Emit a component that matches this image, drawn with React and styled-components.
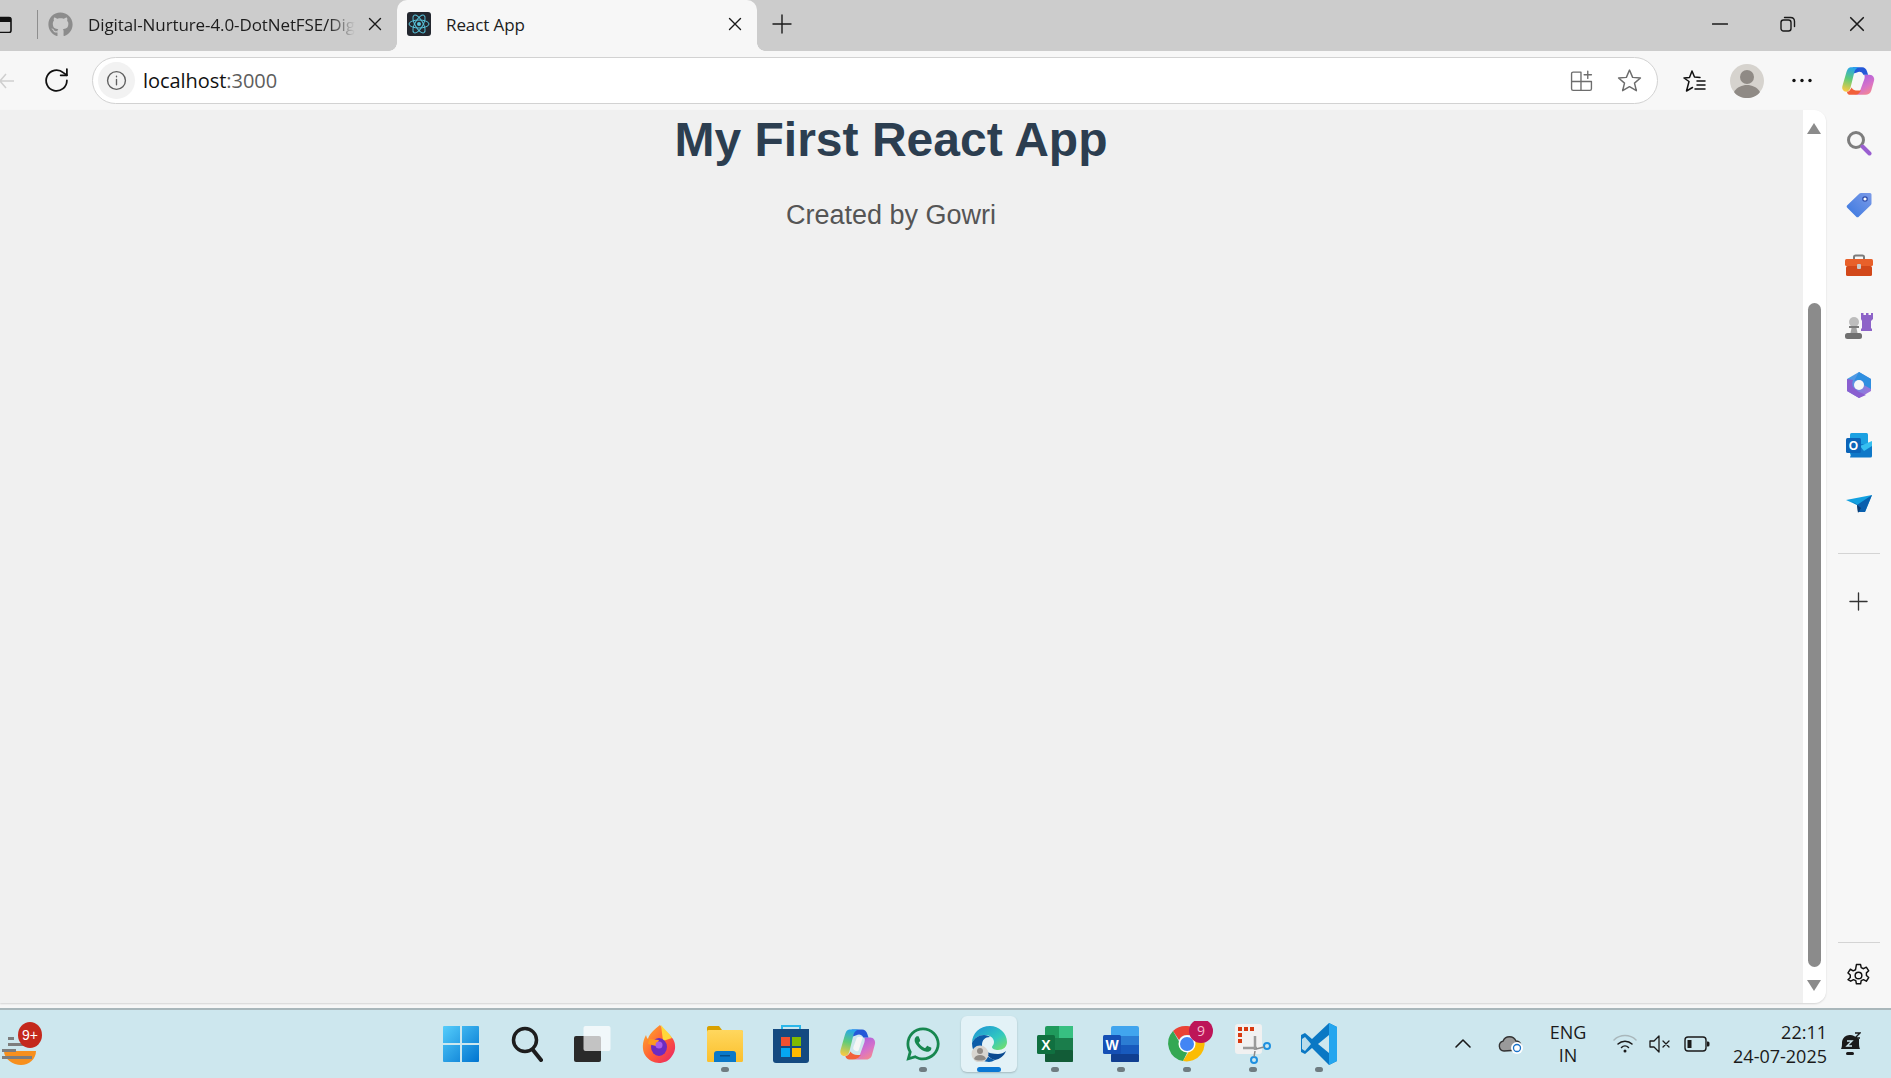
import React from "react";
import styled, { createGlobalStyle } from "styled-components";
import { FaGithub, FaWhatsapp } from "react-icons/fa";

const GlobalStyle = createGlobalStyle`
  html, body {
    margin: 0;
    padding: 0;
    overflow: hidden;
    background: #f7f7f7;
  }
  * {
    box-sizing: border-box;
  }
`;

const Screen = styled.div`
  width: 1891px;
  height: 1078px;
  display: flex;
  flex-direction: column;
  overflow: hidden;
  font-family: "Open Sans", "Noto Sans", sans-serif;
  color: #1b1b1b;
`;

/* ---------- browser tabs ---------- */

const TabStrip = styled.div`
  height: 51px;
  flex: none;
  display: flex;
  align-items: stretch;
  background: #cccccc;
`;

const WindowStub = styled.div`
  width: 38px;
  flex: none;
  display: flex;
  align-items: center;
  justify-content: space-between;
  padding-bottom: 3px;
`;

const TabDivider = styled.span`
  width: 1px;
  height: 29px;
  background: #8e8e8e;
`;

const Tab = styled.div`
  position: relative;
  display: flex;
  align-items: center;
  flex: none;
  width: ${(p) => (p.$active ? "360px" : "359px")};
  padding: 0 15px 3px 10px;
  background: ${(p) => (p.$active ? "#f7f7f7" : "transparent")};
  border-radius: 10px 10px 0 0;
  ${(p) =>
    p.$active &&
    `
    &::before, &::after {
      content: "";
      position: absolute;
      bottom: 0;
      width: 8px;
      height: 8px;
      background: radial-gradient(circle at var(--cx) 0, #cccccc 7.5px, #f7f7f7 8px);
    }
    &::before { left: -8px; --cx: 0; }
    &::after { right: -8px; --cx: 100%; }
  `}
`;

const TabTitle = styled.span`
  flex: 1;
  min-width: 0;
  margin-left: 15px;
  font-size: 17px;
  letter-spacing: -0.1px;
  white-space: nowrap;
  overflow: hidden;
  color: #1d1d1d;
  ${(p) =>
    p.$fade &&
    `
    margin-right: 13px;
    mask-image: linear-gradient(90deg, #000 90%, transparent 100%);
    -webkit-mask-image: linear-gradient(90deg, #000 90%, transparent 100%);
  `}
`;

const NewTab = styled.div`
  width: 50px;
  display: flex;
  align-items: center;
  justify-content: center;
  padding-bottom: 3px;
`;

const WindowControls = styled.div`
  margin-left: auto;
  display: flex;
  align-items: center;
  padding-bottom: 3px;
`;

const WindowButton = styled.div`
  width: 68.5px;
  display: flex;
  justify-content: center;
`;

/* ---------- toolbar ---------- */

const Toolbar = styled.div`
  height: 59px;
  flex: none;
  display: flex;
  align-items: center;
  background: #f7f7f7;
`;

const BackSlot = styled.div`
  width: 43px;
  flex: none;
  display: flex;
  align-items: center;
`;

const ReloadSlot = styled.div`
  width: 49px;
  flex: none;
  display: flex;
  align-items: center;
`;

const AddressBar = styled.div`
  width: 1566px;
  height: 47px;
  flex: none;
  display: flex;
  align-items: center;
  padding: 0 15px 0 5px;
  background: #ffffff;
  border: 1.5px solid #d2d2d2;
  border-radius: 24px;
`;

const SiteInfo = styled.div`
  width: 37px;
  height: 37px;
  flex: none;
  display: flex;
  align-items: center;
  justify-content: center;
  background: #f2f2f2;
  border-radius: 50%;
`;

const Url = styled.span`
  margin-left: 8px;
  font-size: 20px;
  letter-spacing: -0.05px;
  color: #111;
`;

const UrlPort = styled.span`
  color: #5d5d5d;
`;

const AddressActions = styled.div`
  margin-left: auto;
  display: flex;
  align-items: center;
  gap: 24px;
`;

const ToolbarActions = styled.div`
  flex: none;
  display: flex;
  align-items: center;
  padding-left: 20px;
`;

const ToolbarSlot = styled.div`
  width: ${(p) => p.$w}px;
  flex: none;
  display: flex;
  align-items: center;
  justify-content: center;
`;

/* ---------- page ---------- */

const Body = styled.div`
  flex: 1;
  min-height: 0;
  display: flex;
  background: #f7f7f7;
`;

const ViewportFrame = styled.div`
  width: 1826px;
  flex: none;
  height: 893px;
  display: flex;
  background: #f0f0f0;
  border-radius: 0 12px 12px 0;
  box-shadow: 0 1px 2px rgba(0, 0, 0, 0.14);
  overflow: hidden;
`;

const Page = styled.main`
  flex: 1;
  padding-right: 21px;
  text-align: center;
`;

const Heading = styled.h1`
  margin: 2px 0 0;
  font-family: "Liberation Sans", Arial, sans-serif;
  font-size: 48px;
  line-height: 55px;
  font-weight: 700;
  color: #2c3e50;
`;

const Byline = styled.p`
  margin: 33px 0 0;
  font-family: "Liberation Sans", Arial, sans-serif;
  font-size: 27px;
  line-height: 31px;
  color: #555555;
`;

const ScrollTrack = styled.div`
  position: relative;
  width: 23px;
  flex: none;
  background: #ffffff;
`;

const ScrollThumb = styled.div`
  position: absolute;
  left: 5px;
  top: 193px;
  width: 13px;
  height: 664px;
  border-radius: 7px;
  background: #8b8b8b;
`;

const ScrollArrow = styled.div`
  position: absolute;
  left: 4px;
  width: 0;
  height: 0;
  border-left: 7.5px solid transparent;
  border-right: 7.5px solid transparent;
  ${(p) =>
    p.$down
      ? "bottom: 12px; border-top: 11px solid #8b8b8b;"
      : "top: 13px; border-bottom: 11px solid #8b8b8b;"}
`;

const SideRail = styled.aside`
  flex: 1;
  display: flex;
  flex-direction: column;
  align-items: center;
  padding-top: 5px;
`;

const RailButton = styled.div`
  height: ${(p) => (p.$short ? "56px" : "60px")};
  width: 100%;
  flex: none;
  display: flex;
  align-items: center;
  justify-content: center;
`;

const RailRule = styled.div`
  width: 42px;
  height: 1px;
  flex: none;
  margin: ${(p) => p.$margin};
  background: #d4d4d4;
`;

/* ---------- taskbar ---------- */

const Taskbar = styled.footer`
  height: 70px;
  flex: none;
  display: flex;
  align-items: stretch;
  margin-top: 5px;
  background: #cde7ee;
  border-top: 2px solid #a9b7bb;
`;

const WeatherSlot = styled.div`
  width: 428px;
  flex: none;
  display: flex;
  align-items: center;
`;

const TaskIcons = styled.div`
  display: flex;
  align-items: center;
`;

const TaskSlot = styled.div`
  position: relative;
  width: 66px;
  height: 56px;
  display: flex;
  align-items: center;
  justify-content: center;
  &::before {
    content: "";
    position: absolute;
    top: 0;
    bottom: 0;
    left: 5px;
    right: 5px;
    border-radius: 6px;
    ${(p) =>
      p.$current &&
      "background: #e3f2f7; box-shadow: 0 1px 2px rgba(0,0,0,0.2);"}
  }
  & > svg {
    position: relative;
  }
`;

const RunDot = styled.span`
  position: absolute;
  bottom: 0;
  left: 50%;
  height: 5px;
  width: ${(p) => (p.$current ? "24px" : "8px")};
  transform: translateX(-50%);
  border-radius: 3px;
  background: ${(p) => (p.$current ? "#0a78d4" : "#6f7c81")};
`;

const Tray = styled.div`
  margin-left: auto;
  display: flex;
  align-items: center;
  padding-right: 18px;
`;

const TraySlot = styled.div`
  width: ${(p) => p.$w}px;
  flex: none;
  display: flex;
  align-items: center;
  justify-content: center;
`;

const LangStack = styled.div`
  width: 78px;
  flex: none;
  font-size: 18px;
  line-height: 23px;
  text-align: center;
  color: #1a1a1a;
`;

const Clock = styled.div`
  width: 110px;
  flex: none;
  font-size: 18px;
  line-height: 24px;
  text-align: right;
  white-space: nowrap;
  color: #1a1a1a;
`;

/* ---------- icons ---------- */

const SvgDefs = () => (
  <svg width="0" height="0" style={{ position: "absolute" }}>
    <defs>
      <linearGradient id="startBlue" x1="0" y1="0" x2="1" y2="1">
        <stop offset="0" stopColor="#55cdfb" />
        <stop offset="1" stopColor="#0074d0" />
      </linearGradient>
      <linearGradient id="copilotA" x1="0.6" y1="0" x2="0.4" y2="1">
        <stop offset="0" stopColor="#23a3f2" />
        <stop offset="0.5" stopColor="#5fcb78" />
        <stop offset="1" stopColor="#f6c944" />
      </linearGradient>
      <linearGradient id="copilotB" x1="0.2" y1="0" x2="0.8" y2="1">
        <stop offset="0" stopColor="#a25ce6" />
        <stop offset="0.6" stopColor="#d772c8" />
        <stop offset="1" stopColor="#f78a8a" />
      </linearGradient>
      <linearGradient id="edgeTop" x1="0" y1="0" x2="1" y2="1">
        <stop offset="0" stopColor="#1b8fd8" />
        <stop offset="0.6" stopColor="#32c9c0" />
        <stop offset="1" stopColor="#7ee25c" />
      </linearGradient>
      <linearGradient id="folderFill" x1="0" y1="0" x2="0" y2="1">
        <stop offset="0" stopColor="#ffd75e" />
        <stop offset="1" stopColor="#fbc02d" />
      </linearGradient>
      <linearGradient id="ffBody" x1="0" y1="0" x2="1" y2="1">
        <stop offset="0" stopColor="#ffb52c" />
        <stop offset="0.55" stopColor="#ff5a34" />
        <stop offset="1" stopColor="#e8206e" />
      </linearGradient>
      <linearGradient id="m365" x1="0" y1="0" x2="1" y2="1">
        <stop offset="0" stopColor="#31a8e8" />
        <stop offset="1" stopColor="#b06ad8" />
      </linearGradient>
      <linearGradient id="tagBlue" x1="1" y1="0" x2="0" y2="1">
        <stop offset="0" stopColor="#7c9be8" />
        <stop offset="1" stopColor="#3a78e0" />
      </linearGradient>
    </defs>
  </svg>
);

const Stroke = ({ size = 20, color = "#1a1a1a", w = 1.5, children, view = 20 }) => (
  <svg
    width={size}
    height={size}
    viewBox={`0 0 ${view} ${view}`}
    fill="none"
    stroke={color}
    strokeWidth={w}
    strokeLinecap="round"
    strokeLinejoin="round"
  >
    {children}
  </svg>
);

const CloseIcon = ({ size = 14 }) => (
  <Stroke size={size} view={14} w={1.4}>
    <path d="M1.5 1.5l11 11M12.5 1.5l-11 11" />
  </Stroke>
);

const PlusIcon = ({ size = 20, color }) => (
  <Stroke size={size} color={color} w={1.4}>
    <path d="M10 1v18M1 10h18" />
  </Stroke>
);

const ReactFavicon = () => (
  <svg width="24" height="24" viewBox="0 0 24 24">
    <rect width="24" height="24" rx="3" fill="#23272f" />
    <g fill="none" stroke="#58c4dc" strokeWidth="1">
      <ellipse cx="12" cy="12" rx="10" ry="4" />
      <ellipse cx="12" cy="12" rx="10" ry="4" transform="rotate(60 12 12)" />
      <ellipse cx="12" cy="12" rx="10" ry="4" transform="rotate(120 12 12)" />
    </g>
    <circle cx="12" cy="12" r="2" fill="#58c4dc" />
  </svg>
);

const CopilotIcon = ({ size = 32 }) => (
  <svg width={size} height={size} viewBox="0 0 32 32">
    <path d="M21 10h6c3 0 5 3 4 6l-2.500 9c-.8 3-3 4-5.500 4H12c3 0 5-1.500 6-4l4-11c.5-2 .5-4-1-4z" fill="url(#copilotB)" />
    <path d="M11 3h9c2 0 4 1.500 4.500 4l1 3H21c-1.500-3-4-3-6-2l-3 1z" fill="#2458d8" />
    <path d="M9 3h9c-2.500 0-4.500 1.500-5.300 4L9 22c-.8 2.500-2 4-4.500 4H5c-3 0-4.500-2.500-3.600-5.500L5 8c.8-3 2-5 4-5z" fill="url(#copilotA)" />
    <path d="M10 22c1 2 3 3 6 3h3l-1 1c-1 2-3 3-6 3H9c-2 0-3-1-3.500-3 2 0 3.500-2 4.500-4z" fill="#f2603a" />
    <path d="M15.500 10c1.500-1 3.500-1 5 0l-3.500 11c-.5 1-2 1-3.500 0-.8-.5-1.500-1-1-3z" fill="#f6f6f6" />
  </svg>
);

const FirefoxIcon = () => (
  <svg width="36" height="40" viewBox="0 0 36 40">
    <path d="M19 1c3 5 9 8 13 14 3 5 3 12-1 17-3 5-8 7-13 7S7 36 4 31C1 26 1 18 5 11c.5 2 1 3 2 4 1-5 6-9 12-14z" fill="url(#ffBody)" />
    <path d="M20 1c4 5 8 8 11 13l-9 3z" fill="#ffd83a" />
    <ellipse cx="18" cy="23" rx="8" ry="9" fill="#6c2bc0" />
    <path d="M8 15l10 1-3 6-8-2z" fill="#ff9a1e" />
    <circle cx="18" cy="21" r="3.500" fill="#a85be8" />
  </svg>
);

const FolderIcon = () => (
  <svg width="36" height="36" viewBox="0 0 36 36">
    <path d="M0 2c0-1 .6-2 2-2h10l3 4h19c1 0 2 1 2 2v4H0z" fill="#d9a100" />
    <rect y="4" width="36" height="32" rx="1.500" fill="url(#folderFill)" />
    <path d="M7 36v-8c0-2 1-3 3-3h16c2 0 3 1 3 3v8z" fill="#0a78c8" />
    <rect x="13" y="29" width="10" height="1.500" fill="#064f88" />
  </svg>
);

const StoreIcon = () => (
  <svg width="36" height="40" viewBox="0 0 36 40">
    <path d="M9 5V2h18v3" fill="none" stroke="#2cb7ea" strokeWidth="2" />
    <path d="M0 5h36v31c0 2-1 3-3 3H3c-2 0-3-1-3-3z" fill="#144a80" />
    <rect x="8" y="13" width="9" height="9" fill="#f05030" />
    <rect x="19" y="13" width="9" height="9" fill="#7fba00" />
    <rect x="8" y="24" width="9" height="9" fill="#05a6f0" />
    <rect x="19" y="24" width="9" height="9" fill="#ffb900" />
  </svg>
);

const EdgeIcon = () => (
  <svg width="36" height="36" viewBox="0 0 36 36">
    <path d="M1 17C1 7 9 0 19 0c9 0 17 7 17 16 0 5-4 8-9 8-3 0-6-1-6-3 0-1 2-2 2-5 0-4-4-7-9-7-6 0-11 3-13 8z" fill="url(#edgeTop)" />
    <path d="M1 17c2-5 7-8 12-8 3 0 5 1 6 2-5 0-8 3-8 8 0 6 5 13 13 15-2 1-4 2-6 2C8 36 1 27 1 17z" fill="#0c5ca8" />
    <path d="M24 34c-4-1-8-4-10-9 3 2 8 3 13 3 3 0 6-1 8-3-2 5-6 8-11 9z" fill="#0a4a90" />
    <circle cx="9" cy="28" r="8.500" fill="#d8d5d0" />
    <circle cx="9" cy="25" r="3" fill="#8f8a85" />
    <path d="M3 33c1-3 3-4 6-4s5 1 6 4c-3 2-9 2-12 0z" fill="#8f8a85" />
  </svg>
);

const ExcelIcon = () => (
  <svg width="36" height="36" viewBox="0 0 36 36">
    <rect x="8" width="28" height="36" rx="2" fill="#1f9a5c" />
    <rect x="22" width="14" height="12" fill="#37c081" />
    <rect x="8" y="12" width="28" height="12" fill="#1a7d4b" />
    <rect x="8" y="24" width="28" height="12" rx="1" fill="#125c37" />
    <rect y="9" width="18" height="19" rx="1.500" fill="#107040" />
    <text x="9" y="23.500" textAnchor="middle" fontFamily="'Liberation Sans', sans-serif" fontWeight="700" fontSize="14" fill="#fff">X</text>
  </svg>
);

const WordIcon = () => (
  <svg width="36" height="36" viewBox="0 0 36 36">
    <rect x="8" width="28" height="36" rx="2" fill="#41a5ee" />
    <rect x="8" y="10" width="28" height="9" fill="#2b7cd3" />
    <rect x="8" y="19" width="28" height="9" fill="#185abd" />
    <rect x="8" y="28" width="28" height="8" rx="1" fill="#103f91" />
    <rect y="9" width="18" height="19" rx="1.500" fill="#1550b5" />
    <text x="9" y="23.500" textAnchor="middle" fontFamily="'Liberation Sans', sans-serif" fontWeight="700" fontSize="14" fill="#fff">W</text>
  </svg>
);

const ChromeIcon = () => (
  <svg width="54" height="46" viewBox="-8 0 54 46">
    <path d="M19 5a18 18 0 0 1 15.600 9H19a9 9 0 0 0-8 5L5 10a18 18 0 0 1 14-5z" fill="#ea4335" />
    <path d="M5 10l8 14a9 9 0 0 0 8 4l-6 12A18 18 0 0 1 5 10z" fill="#34a853" />
    <path d="M34.600 14a18 18 0 0 1-19.600 26l8-13a9 9 0 0 0 3-13z" fill="#fbbc04" />
    <circle cx="19" cy="23" r="8.500" fill="#fff" />
    <circle cx="19" cy="23" r="7" fill="#4285f4" />
    <circle cx="33" cy="10" r="12" fill="#bd1558" />
    <text x="33" y="15" textAnchor="middle" fontFamily="'Open Sans', sans-serif" fontSize="14" fill="#f5b8cd">9</text>
  </svg>
);

const SnipIcon = () => (
  <svg width="36" height="40" viewBox="0 0 36 40">
    <rect x="0" y="0" width="27" height="30" rx="3" fill="#f1f1f1" />
    <path d="M3 3h4v4H3zM9 3h4v4H9zM15 3h4v4h-4zM3 9h4v4H3zM3 15h4v4H3z" fill="#d8390f" />
    <path d="M8 24h14M20 12v14" stroke="#9a9a9a" strokeWidth="2.500" fill="none" />
    <circle cx="32" cy="22" r="3" fill="none" stroke="#1e90e0" strokeWidth="2" />
    <circle cx="19" cy="36" r="3" fill="none" stroke="#1e90e0" strokeWidth="2" />
    <path d="M21 25l8-2M20 27l-1 6" stroke="#8a8a8a" strokeWidth="1.500" />
  </svg>
);

const VsCodeIcon = () => (
  <svg width="36" height="42" viewBox="0 0 36 42">
    <path d="M28 0l8 4v34l-8 4-17-17-7 6-4-2v-17l4-2 7 6z" fill="#0a78c4" />
    <path d="M28 0l8 4v34l-8 4z" fill="#25a6ef" />
    <path d="M28 12l-11 9 11 9z" fill="#cde7ee" />
    <path d="M4 14l-3 2v10l3 2 6-7z" fill="#cde7ee" opacity="0.9" />
  </svg>
);

const App = () => (
  <Screen>
    <GlobalStyle />
    <SvgDefs />
    <TabStrip>
      <WindowStub>
        <svg width="12" height="18" viewBox="0 0 12 18">
          <path d="M-4 2.500h13a2 2 0 0 1 2 2v11a2 2 0 0 1-2 2H-4" fill="none" stroke="#111" strokeWidth="1.600" />
          <rect x="-4" y="2.500" width="15" height="4.500" fill="#111" />
        </svg>
        <TabDivider />
      </WindowStub>
      <Tab>
        <FaGithub size={25} color="#8c8c8c" />
        <TabTitle $fade>Digital-Nurture-4.0-DotNetFSE/Digital</TabTitle>
        <CloseIcon />
      </Tab>
      <Tab $active>
        <ReactFavicon />
        <TabTitle>React App</TabTitle>
        <CloseIcon />
      </Tab>
      <NewTab>
        <PlusIcon />
      </NewTab>
      <WindowControls>
        <WindowButton>
          <Stroke size={16} view={16} w={1.3}>
            <path d="M0.500 8h15" />
          </Stroke>
        </WindowButton>
        <WindowButton>
          <Stroke size={16} view={16} w={1.4}>
            <rect x="1" y="4" width="10" height="11" rx="2.500" />
            <path d="M4.500 1.500h6c2.500 0 4 1.500 4 4v5" />
          </Stroke>
        </WindowButton>
        <WindowButton>
          <CloseIcon size={16} />
        </WindowButton>
      </WindowControls>
    </TabStrip>

    <Toolbar>
      <BackSlot>
        <svg width="14" height="20" viewBox="0 0 14 20" fill="none" stroke="#cfcfcf" strokeWidth="1.500">
          <path d="M0 10h14M6 3L0 10l6 7" />
        </svg>
      </BackSlot>
      <ReloadSlot>
        <Stroke size={27} view={26} w={1.7} color="#111">
          <path d="M23 13a10 10 0 1 1-3.500-7.600L23 8" />
          <path d="M23 2v6h-6" />
        </Stroke>
      </ReloadSlot>
      <AddressBar>
        <SiteInfo>
          <Stroke size={21} view={20} w={1.3} color="#5f5f5f">
            <circle cx="10" cy="10" r="8.500" />
            <path d="M10 9v5M10 6v.4" />
          </Stroke>
        </SiteInfo>
        <Url>
          localhost<UrlPort>:3000</UrlPort>
        </Url>
        <AddressActions>
          <Stroke size={23} view={22} w={1.3} color="#6d6d6d">
            <path d="M10 3H3a1.500 1.500 0 0 0-1.500 1.500V19A1.500 1.500 0 0 0 3 20.500h16a1.500 1.500 0 0 0 1.500-1.500v-7H3M10.500 3v17.500M10.500 12H1.500" />
            <path d="M17 2v7M13.500 5.500h7" />
          </Stroke>
          <Stroke size={25} view={24} w={1.4} color="#6d6d6d">
            <path d="M12 2l3 7 7.500.6-5.700 4.900 1.800 7.300L12 17.900l-6.600 3.900 1.800-7.300L1.500 9.600 9 9z" />
          </Stroke>
        </AddressActions>
      </AddressBar>
      <ToolbarActions>
        <ToolbarSlot $w={32}>
          <Stroke size={26} view={26} w={1.5} color="#111">
            <path d="M11 3l2.500 6 5.500.5M3 10l5 3.500L5.500 23l6-3.500M3 10l5.500-.6L11 3" />
            <path d="M16 13h8M16 17h8M14 21h10" />
          </Stroke>
        </ToolbarSlot>
        <ToolbarSlot $w={74}>
          <svg width="34" height="34" viewBox="0 0 34 34">
            <circle cx="17" cy="17" r="17" fill="#d6d3ce" />
            <circle cx="17" cy="13" r="7" fill="#8f8a85" />
            <path d="M4 28c3-5 8-7 13-7s10 2 13 7c-3 4-8 6-13 6s-10-2-13-6z" fill="#8f8a85" />
          </svg>
        </ToolbarSlot>
        <ToolbarSlot $w={36}>
          <svg width="20" height="5" viewBox="0 0 20 5" fill="#111">
            <circle cx="2" cy="2.500" r="1.700" />
            <circle cx="10" cy="2.500" r="1.700" />
            <circle cx="18" cy="2.500" r="1.700" />
          </svg>
        </ToolbarSlot>
        <ToolbarSlot $w={76}>
          <CopilotIcon size={34} />
        </ToolbarSlot>
      </ToolbarActions>
    </Toolbar>

    <Body>
      <ViewportFrame>
        <Page>
          <Heading>My First React App</Heading>
          <Byline>Created by Gowri</Byline>
        </Page>
        <ScrollTrack>
          <ScrollArrow />
          <ScrollThumb />
          <ScrollArrow $down />
        </ScrollTrack>
      </ViewportFrame>
      <SideRail>
        <RailButton>
          <svg width="26" height="30" viewBox="0 0 26 30" fill="none">
            <circle cx="10" cy="10" r="7.500" stroke="#7d7d7d" strokeWidth="3" />
            <path d="M16.500 16.500l7 7" stroke="#9a5fd0" strokeWidth="4" strokeLinecap="round" />
          </svg>
        </RailButton>
        <RailButton>
          <svg width="26" height="26" viewBox="0 0 26 26">
            <path d="M15 1h9a1.500 1.500 0 0 1 1.500 1.500v9a2 2 0 0 1-.6 1.500L13 24.500a2 2 0 0 1-3 0L1.500 16a2 2 0 0 1 0-3L13.500 1.600A2 2 0 0 1 15 1z" fill="url(#tagBlue)" />
            <circle cx="19" cy="7" r="2.200" fill="#fff" stroke="#2d4aa8" strokeWidth="1.200" />
          </svg>
        </RailButton>
        <RailButton>
          <svg width="28" height="22" viewBox="0 0 28 22">
            <path d="M9 6V3a1.500 1.500 0 0 1 1.500-1.500h7A1.500 1.500 0 0 1 19 3v3" fill="none" stroke="#7c7c7c" strokeWidth="2" />
            <rect y="5" width="28" height="7" rx="1.500" fill="#e8602a" />
            <rect x="1" y="12" width="26" height="10" rx="1.500" fill="#d2481a" />
            <rect x="12" y="10" width="4" height="5" rx="1" fill="#c9c9c9" />
          </svg>
        </RailButton>
        <RailButton>
          <svg width="28" height="28" viewBox="0 0 28 28">
            <path d="M16 2h2.500v2H21V2h2.500v2H26V2h2v6l-2 2v7l1 1v2H16v-2l1-1v-7l-1-2z" fill="#8d63c8" />
            <circle cx="9" cy="11" r="5" fill="#bdbdbd" />
            <path d="M4 15h10v2H4z" fill="#7a7a7a" />
            <path d="M6.500 17h5l1 5h-7z" fill="#a2a2a2" />
            <rect y="22" width="17" height="6" rx="2.500" fill="#707070" />
          </svg>
        </RailButton>
        <RailButton>
          <svg width="26" height="28" viewBox="0 0 26 28" fill="none">
            <path d="M13 1l12 7v12l-12 7-12-7V8z" fill="url(#m365)" />
            <path d="M13 1l12 7v10l-7-4c0-3-2-5-5-5-3 0-5 1-5 1z" fill="#2f8fe0" />
            <path d="M1 8l6 1c-1 2-1 5 0 7l6 5 7 3-7 3-12-7z" fill="#8a5fd0" />
            <circle cx="13" cy="14" r="5" fill="#f7f7f7" />
          </svg>
        </RailButton>
        <RailButton>
          <svg width="26" height="26" viewBox="0 0 26 26">
            <rect x="4" y="1" width="18" height="22" rx="1.500" fill="#1ba1e2" />
            <path d="M8 12h18v12a1.500 1.500 0 0 1-1.500 1.500H4z" fill="#0f78c8" />
            <path d="M14 14l12-5v5l-8 5z" fill="#36c0f0" />
            <rect y="6" width="15" height="15" rx="1.500" fill="#0b64b8" />
            <text x="7.500" y="18" textAnchor="middle" fontFamily="'Liberation Sans', sans-serif" fontWeight="700" fontSize="12" fill="#fff">O</text>
          </svg>
        </RailButton>
        <RailButton>
          <svg width="26" height="20" viewBox="0 0 26 20">
            <path d="M0 5L26 0l-7 17-8-7z" fill="#12a0e0" />
            <path d="M26 0L11 10l1 7 7-0z" fill="#0a5fae" />
            <path d="M5 6l6 4 1 8 3-5-5-4z" fill="#0c3c70" />
          </svg>
        </RailButton>
        <RailRule $margin="18px 0 17px" />
        <RailButton>
          <PlusIcon size={19} color="#333" />
        </RailButton>
        <RailRule $margin="auto 0 4px" />
        <RailButton $short>
          <Stroke size={25} view={24} w={1.4} color="#111">
            <circle cx="12" cy="12" r="3.200" />
            <path d="M10 1.500h4l.6 3 2.200 1 2.700-1.500 2.300 3.500-2.200 2v2.500l2.200 2-2.300 3.500-2.700-1.500-2.200 1-.6 3h-4l-.6-3-2.200-1-2.700 1.500L1.900 16l2.200-2v-2.500l-2.200-2L4.200 6l2.700 1.500 2.200-1z" />
          </Stroke>
        </RailButton>
      </SideRail>
    </Body>

    <Taskbar>
      <WeatherSlot>
        <svg width="42" height="46" viewBox="0 0 42 46">
          <path d="M4 30h32c0 8-7 14-15 14S4 38 4 30z" fill="#f7901e" />
          <path d="M8 22h20v3H8zM2 28h14v3H2zM2 35h30v3H2zM8 16h6v3H8z" fill="#7d7d7d" />
          <ellipse cx="30" cy="14" rx="12" ry="13" fill="#c4281c" />
          <text x="30" y="19" textAnchor="middle" fontFamily="'Liberation Sans', sans-serif" fontSize="14" fill="#fff">9+</text>
        </svg>
      </WeatherSlot>
      <TaskIcons>
        <TaskSlot>
          <svg width="36" height="36" viewBox="0 0 36 36" fill="url(#startBlue)">
            <path d="M1 0h16v17H0V1a1 1 0 0 1 1-1zM19 0h16a1 1 0 0 1 1 1v16H19zM0 19h17v17H1a1 1 0 0 1-1-1zM19 19h17v16a1 1 0 0 1-1 1H19z" />
          </svg>
        </TaskSlot>
        <TaskSlot>
          <svg width="32" height="36" viewBox="0 0 32 36" fill="none" stroke="#1d1d1d">
            <circle cx="14" cy="14" r="11.500" strokeWidth="3.500" />
            <path d="M22 24l8 10" strokeWidth="4" strokeLinecap="round" />
          </svg>
        </TaskSlot>
        <TaskSlot>
          <svg width="38" height="36" viewBox="0 0 38 36">
            <rect y="10" width="27" height="26" rx="2" fill="#2a2a2a" />
            <rect x="9.500" y="0" width="27" height="25" rx="2" fill="#ffffff" opacity="0.72" />
          </svg>
        </TaskSlot>
        <TaskSlot>
          <FirefoxIcon />
        </TaskSlot>
        <TaskSlot>
          <FolderIcon />
          <RunDot />
        </TaskSlot>
        <TaskSlot>
          <StoreIcon />
        </TaskSlot>
        <TaskSlot>
          <CopilotIcon size={37} />
        </TaskSlot>
        <TaskSlot>
          <FaWhatsapp size={38} color="#17874f" />
          <RunDot />
        </TaskSlot>
        <TaskSlot $current>
          <EdgeIcon />
          <RunDot $current />
        </TaskSlot>
        <TaskSlot>
          <ExcelIcon />
          <RunDot />
        </TaskSlot>
        <TaskSlot>
          <WordIcon />
          <RunDot />
        </TaskSlot>
        <TaskSlot>
          <ChromeIcon />
          <RunDot />
        </TaskSlot>
        <TaskSlot>
          <SnipIcon />
          <RunDot />
        </TaskSlot>
        <TaskSlot>
          <VsCodeIcon />
          <RunDot />
        </TaskSlot>
      </TaskIcons>
      <Tray>
        <TraySlot $w={60}>
          <Stroke size={18} view={18} w={1.6}>
            <path d="M2 12l7-7 7 7" />
          </Stroke>
        </TraySlot>
        <TraySlot $w={36}>
          <svg width="26" height="22" viewBox="0 0 26 22">
            <path d="M6 18a5 5 0 0 1-1-9.800A7 7 0 0 1 18 8a5 5 0 0 1 3 9z" fill="#9a9a9a" stroke="#333" strokeWidth="1.400" />
            <circle cx="19" cy="15" r="6" fill="#fff" />
            <circle cx="19" cy="15" r="3.500" fill="none" stroke="#1a72c8" strokeWidth="1.300" />
          </svg>
        </TraySlot>
        <LangStack>
          ENG
          <br />
          IN
        </LangStack>
        <TraySlot $w={36}>
          <svg width="24" height="20" viewBox="0 0 24 20" fill="none" stroke="#1a1a1a" strokeWidth="1.500" strokeLinecap="round">
            <path d="M1 6a16 16 0 0 1 22 0" stroke="#a9b7bb" />
            <path d="M5 10a10 10 0 0 1 14 0M8.500 13.500a5 5 0 0 1 7 0" />
            <circle cx="12" cy="17" r="1.500" fill="#1a1a1a" stroke="none" />
          </svg>
        </TraySlot>
        <TraySlot $w={34}>
          <Stroke size={24} view={24} w={1.3}>
            <path d="M2 9v6h4l5 5V4L6 9zM15 9l6 6M21 9l-6 6" />
          </Stroke>
        </TraySlot>
        <TraySlot $w={40}>
          <svg width="26" height="16" viewBox="0 0 26 16" fill="none">
            <rect x="1" y="1" width="21" height="14" rx="3" stroke="#1a1a1a" strokeWidth="1.400" />
            <rect x="3.500" y="4" width="4" height="8" fill="#1a1a1a" />
            <path d="M23 5.500h1a1.500 1.500 0 0 1 1.500 1.500v2A1.500 1.500 0 0 1 24 10.500h-1z" fill="#1a1a1a" />
          </svg>
        </TraySlot>
        <Clock>
          22:11
          <br />
          24-07-2025
        </Clock>
        <TraySlot $w={46}>
          <svg width="22" height="24" viewBox="0 0 22 24">
            <path d="M2 17c1-2 1-4 1-7a8 8 0 0 1 12-6l5 3v3c0 3 0 5 1 7z" fill="#1a1a1a" />
            <rect x="7" y="20" width="8" height="3" rx="1.500" fill="#1a1a1a" />
            <path d="M8 9h5l-5 5h5" fill="none" stroke="#cde7ee" strokeWidth="1.400" />
            <path d="M16 1h5l-5 5h5" fill="none" stroke="#1a1a1a" strokeWidth="1.400" />
          </svg>
        </TraySlot>
      </Tray>
    </Taskbar>
  </Screen>
);

export default App;
